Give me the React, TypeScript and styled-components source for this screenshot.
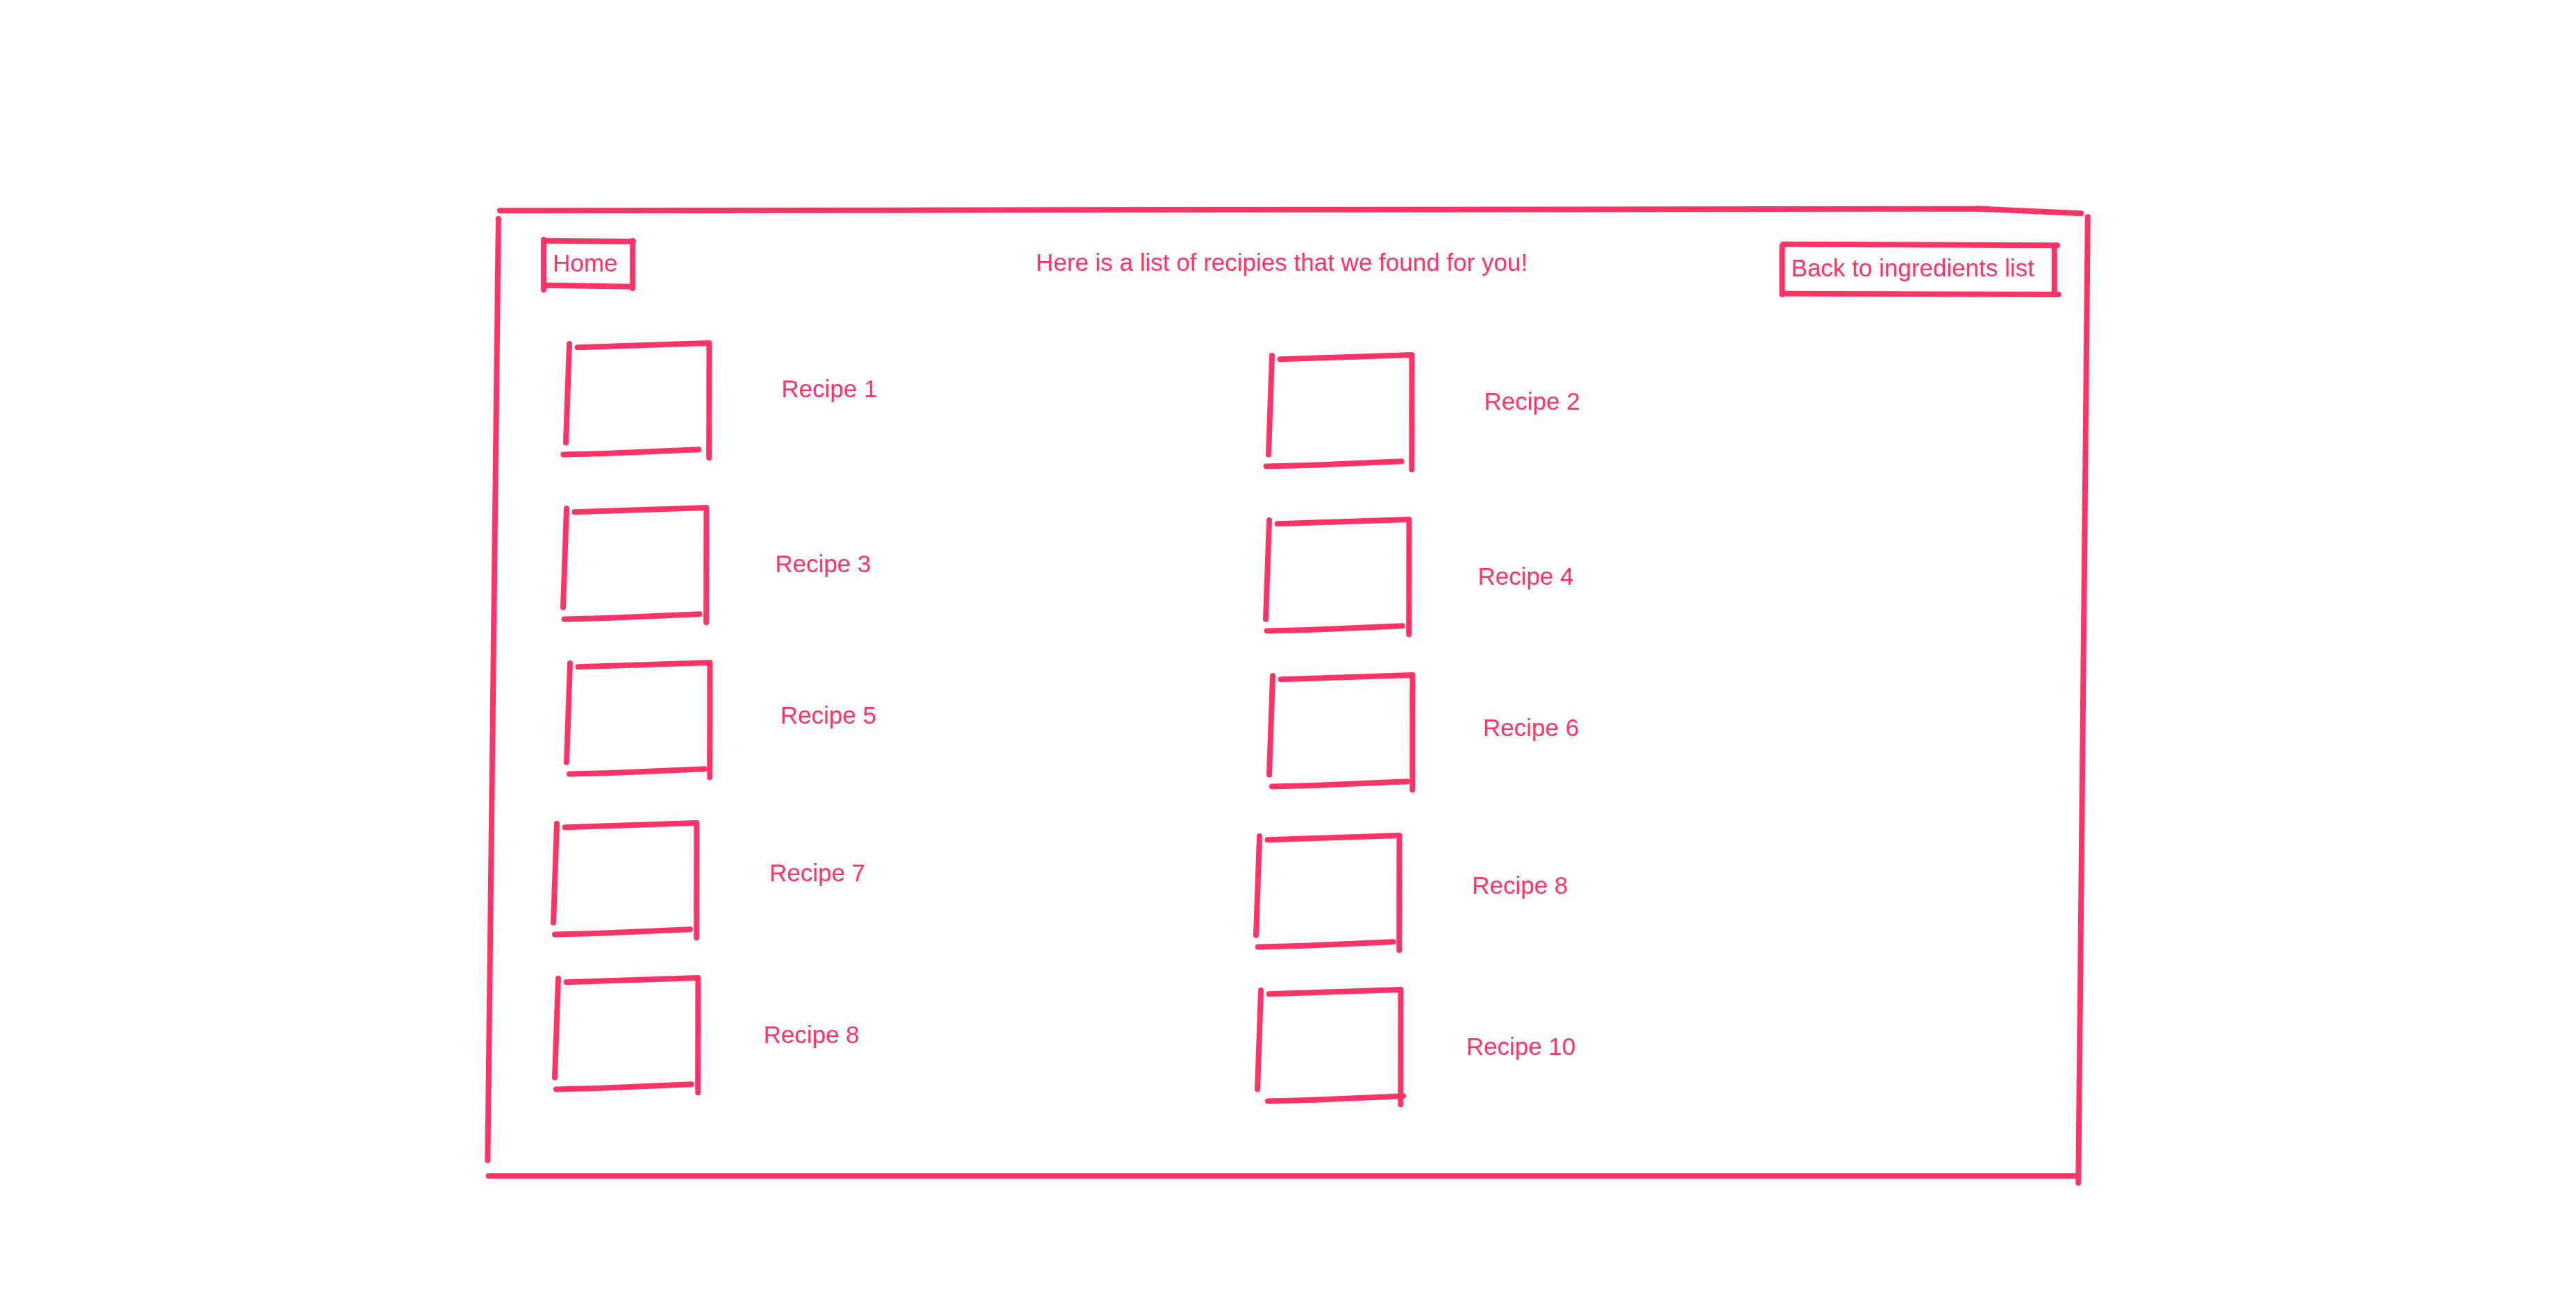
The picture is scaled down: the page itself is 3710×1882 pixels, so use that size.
import React from "react";
import styled, { createGlobalStyle } from "styled-components";

const INK = "#ff3366";

type Line = [number, number, number, number];

const GlobalStyle = createGlobalStyle`
  html, body {
    margin: 0;
    padding: 0;
    background: #ffffff;
  }
  body {
    font-family: "Liberation Sans", Arial, sans-serif;
  }
`;

const Page = styled.main`
  width: 3710px;
  height: 1882px;
  box-sizing: border-box;
  padding: 296px 0 0 696px;
  background: #ffffff;
  overflow: hidden;
`;

const Frame = styled.section`
  position: relative;
  width: 2318px;
  height: 1414px;
  box-sizing: border-box;
  padding-top: 45px;
`;

const Sketch = styled.svg`
  position: absolute;
  left: 0;
  top: 0;
  overflow: visible;
  pointer-events: none;
`;

const Header = styled.header`
  display: flex;
  align-items: flex-start;
  padding: 0 43px 0 82px;
`;

const SketchButton = styled.button<{
  $w: number;
  $h: number;
  $pl: number;
  $pt: number;
  $mt: number;
  $push?: boolean;
}>`
  position: relative;
  display: flex;
  align-items: flex-start;
  justify-content: flex-start;
  width: ${(p) => p.$w}px;
  height: ${(p) => p.$h}px;
  box-sizing: border-box;
  margin: ${(p) => p.$mt}px 0 0 ${(p) => (p.$push ? "auto" : "0")};
  padding: ${(p) => p.$pt}px 0 0 ${(p) => p.$pl}px;
  border: none;
  background: transparent;
  color: ${INK};
  font-family: "Liberation Sans", Arial, sans-serif;
  font-size: 35px;
  line-height: 40px;
  white-space: nowrap;
  cursor: pointer;
`;

const Title = styled.h1`
  margin: 16.5px 0 0 575px;
  color: ${INK};
  font-family: "Liberation Sans", Arial, sans-serif;
  font-size: 35px;
  line-height: 40px;
  font-weight: 400;
  white-space: nowrap;
`;

const RecipeList = styled.div`
  display: flex;
  flex-direction: column;
  margin-top: 58.5px;
`;

const Row = styled.div<{ $x: number; $gap: number }>`
  display: grid;
  grid-template-columns: 1012px auto;
  align-items: start;
  padding-left: ${(p) => p.$x}px;
  margin-top: ${(p) => p.$gap}px;
`;

const Item = styled.div<{ $drop: number }>`
  display: flex;
  align-items: flex-start;
  padding-top: ${(p) => p.$drop}px;
`;

const Thumb = styled.svg`
  display: block;
  flex: none;
  overflow: visible;
`;

const Label = styled.span<{ $ml: number; $mt: number }>`
  margin: ${(p) => p.$mt}px 0 0 ${(p) => p.$ml}px;
  color: ${INK};
  font-size: 35px;
  line-height: 40px;
  white-space: nowrap;
`;

const Strokes: React.FC<{ lines: Line[] }> = ({ lines }) => (
  <>
    {lines.map(([x1, y1, x2, y2], i) => (
      <line key={i} x1={x1} y1={y1} x2={x2} y2={y2} />
    ))}
  </>
);

const strokeProps = {
  stroke: INK,
  strokeWidth: 8,
  strokeLinecap: "round" as const,
  strokeLinejoin: "round" as const,
  fill: "none",
};

const frameLines: Line[] = [
  [24, 7.3, 2167, 4.7],
  [2151, 4.5, 2301.4, 11.3],
  [2310.8, 16.3, 2297.3, 1407.3],
  [7.6, 1397.3, 2292.3, 1397.3],
  [21.9, 19, 6.4, 1374.7],
];

const homeLines: Line[] = [
  [5, 5.7, 134, 6.7],
  [5, 4, 5, 76.3],
  [133.2, 5.7, 133.2, 74],
  [6.8, 69.7, 133, 71.7],
];

const backLines: Line[] = [
  [5.6, 8, 5.6, 78],
  [7.4, 5.7, 402, 7.3],
  [397.8, 9, 397.8, 74],
  [7.4, 76.7, 403.7, 78],
];

const BoxSketch: React.FC<{ shift: number }> = ({ shift }) => (
  <Thumb width={226} height={177} viewBox="0 0 226 177" {...strokeProps}>
    <line x1={14} y1={7} x2={9} y2={149.5} />
    <polyline points="25.6,12.2 215.4,6 215.2,171.3" />
    <polyline
      points={`${14 + shift},166.5 ${14 + shift + 60},165 ${14 + shift + 195},159.2`}
    />
  </Thumb>
);

type RowData = {
  x: number;
  gap: number;
  labelX: number;
  labelY: number;
  items: { name: string; shift: number }[];
};

const rows: RowData[] = [
  {
    x: 109.7,
    gap: 0,
    labelX: 93.8,
    labelY: 52.9,
    items: [
      { name: "Recipe 1", shift: -8.7 },
      { name: "Recipe 2", shift: -8.4 },
    ],
  },
  {
    x: 106,
    gap: 42.5,
    labelX: 88.4,
    labelY: 67.5,
    items: [
      { name: "Recipe 3", shift: -3.3 },
      { name: "Recipe 4", shift: -3.3 },
    ],
  },
  {
    x: 111,
    gap: 29.3,
    labelX: 91,
    labelY: 61.8,
    items: [
      { name: "Recipe 5", shift: -1 },
      { name: "Recipe 6", shift: -1 },
    ],
  },
  {
    x: 92,
    gap: 36.5,
    labelX: 94.2,
    labelY: 58,
    items: [
      { name: "Recipe 7", shift: -3 },
      { name: "Recipe 8", shift: -2.3 },
    ],
  },
  {
    x: 93.7,
    gap: 28.2,
    labelX: 84,
    labelY: 68,
    items: [
      { name: "Recipe 8", shift: -3 },
      { name: "Recipe 10", shift: 10 },
    ],
  },
];

export default function App() {
  return (
    <>
      <GlobalStyle />
      <Page>
        <Frame>
          <Sketch width={2318} height={1414} {...strokeProps}>
            <Strokes lines={frameLines} />
          </Sketch>
          <Header>
            <SketchButton $w={139} $h={81} $pl={18.2} $pt={18.3} $mt={0}>
              <Sketch width={139} height={81} {...strokeProps}>
                <Strokes lines={homeLines} />
              </Sketch>
              Home
            </SketchButton>
            <Title>Here is a list of recipies that we found for you!</Title>
            <SketchButton $w={410} $h={83} $pl={18.8} $pt={20} $mt={5} $push>
              <Sketch width={410} height={83} {...strokeProps}>
                <Strokes lines={backLines} />
              </Sketch>
              Back to ingredients list
            </SketchButton>
          </Header>
          <RecipeList>
            {rows.map((row, ri) => (
              <Row key={ri} $x={row.x} $gap={row.gap}>
                {row.items.map((item, ii) => (
                  <Item key={ii} $drop={ii === 0 ? 0 : 17.5}>
                    <BoxSketch shift={item.shift} />
                    <Label $ml={row.labelX} $mt={row.labelY}>
                      {item.name}
                    </Label>
                  </Item>
                ))}
              </Row>
            ))}
          </RecipeList>
        </Frame>
      </Page>
    </>
  );
}
